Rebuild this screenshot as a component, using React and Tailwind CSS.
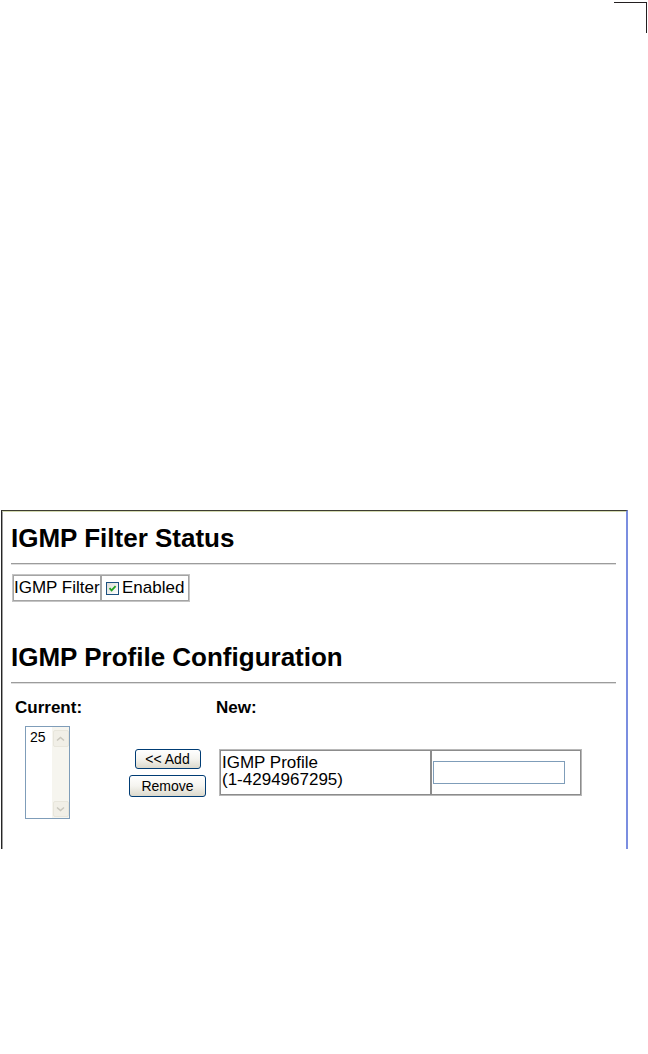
import React from "react";

const font = { fontFamily: '"Liberation Sans", Arial, sans-serif' };

function Hr() {
  return <div className="w-[605px] h-[2px] border-t border-b border-t-[#9c9c9c] border-b-[#dedede]" />;
}

function Checkbox() {
  return (
    <div className="w-[13px] h-[13px] border border-[#1c5180] bg-gradient-to-br from-[#dcdcd7] to-white flex items-center justify-center">
      <svg width="9" height="9" viewBox="0 0 9 9">
        <path d="M1.5 4.2 L3.6 6.4 L7.6 2.2" fill="none" stroke="#21a121" strokeWidth="1.8" />
      </svg>
    </div>
  );
}

function XpButton({ children, className }) {
  return (
    <button
      className={`border border-[#003c74] rounded-[3px] bg-gradient-to-b from-white via-[#f5f4ef] to-[#dcd9cc] text-[14px] leading-[16px] text-black flex items-center justify-center ${className}`}
      style={font}
    >
      {children}
    </button>
  );
}

function ListBox() {
  return (
    <div className="w-[45px] h-[93px] border border-[#7f9db9] bg-white flex">
      <div className="flex-1 pl-[4px] pt-[2px] text-[14px] leading-[16px] text-black">25</div>
      <div className="w-[17px] h-full bg-[#f6f5ef] flex flex-col justify-between items-center py-[1px]">
        <div className="mt-[2px] w-[16px] h-[17px] rounded-[2px] border border-[#e8e6dc] bg-[#f1efe7] flex items-center justify-center">
          <svg width="9" height="6" viewBox="0 0 9 6">
            <path d="M1 4.5 L4.5 1.5 L8 4.5" fill="none" stroke="#c9c7bd" strokeWidth="1.5" />
          </svg>
        </div>
        <div className="w-[16px] h-[16px] rounded-[2px] border border-[#e8e6dc] bg-[#f1efe7] flex items-center justify-center">
          <svg width="9" height="6" viewBox="0 0 9 6">
            <path d="M1 1.5 L4.5 4.5 L8 1.5" fill="none" stroke="#c9c7bd" strokeWidth="1.5" />
          </svg>
        </div>
      </div>
    </div>
  );
}

export default function App() {
  return (
    <div className="w-[648px] h-[1054px] bg-white relative" style={font}>
      <div className="flex justify-end pt-[2px] pr-[1px]">
        <div className="w-[33px] h-[31px] border-t border-r border-[#231f20]" />
      </div>
      <div className="mt-[477px] ml-[1px] w-[627px] h-[339px] border-t border-l border-r-2 border-t-[#3c3c30] border-l-[#262626] border-r-[#7b8ee0]">
        <div className="h-full border-t border-l border-t-[#d3d9b0] border-l-[#a0a0a0] pl-[8px] text-black">
          <div className="mt-[11px] text-[26px] leading-[30px] font-bold">IGMP Filter Status</div>
          <div className="mt-[10px]"><Hr /></div>
          <div className="mt-[9px] ml-[1px] w-[178px] h-[28px] border border-[#c4c4c4] flex">
            <div className="w-[88px] h-full border border-[#a4a4a4] flex items-center text-[17px] leading-[20px] whitespace-nowrap pl-0">
              IGMP Filter
            </div>
            <div className="flex-1 h-full border border-[#a4a4a4] flex items-center text-[17px] leading-[20px] pl-[4px] gap-[3px]">
              <Checkbox />
              <span>Enabled</span>
            </div>
          </div>
          <div className="mt-[40px] text-[26px] leading-[30px] font-bold">IGMP Profile Configuration</div>
          <div className="mt-[10px]"><Hr /></div>
          <div className="mt-[14px] ml-[4px] flex">
            <div className="w-[114px] flex flex-col">
              <div className="text-[17px] leading-[20px] font-bold">Current:</div>
              <div className="mt-[8px] ml-[10px]"><ListBox /></div>
            </div>
            <div className="w-[77px] mt-[51px] flex flex-col items-center gap-[6px]">
              <XpButton className="w-[66px] h-[20px]">{"<< Add"}</XpButton>
              <XpButton className="w-[77px] h-[22px]">Remove</XpButton>
            </div>
            <div className="ml-[10px] flex flex-col">
              <div className="text-[17px] leading-[20px] font-bold">New:</div>
              <div className="mt-[31px] ml-[3px] w-[363px] h-[47px] border border-[#b8b8b8] flex">
                <div className="w-[211px] h-full border border-[#8c8c8c] pl-[1px] pt-[3px] text-[17px] leading-[17px]">
                  <div>IGMP Profile</div>
                  <div>(1-4294967295)</div>
                </div>
                <div className="w-[150px] h-full border border-[#8c8c8c] flex items-center pl-[1px]">
                  <input className="w-[132px] h-[23px] border border-[#7f9db9] bg-white outline-none" />
                </div>
              </div>
            </div>
          </div>
        </div>
      </div>
    </div>
  );
}
